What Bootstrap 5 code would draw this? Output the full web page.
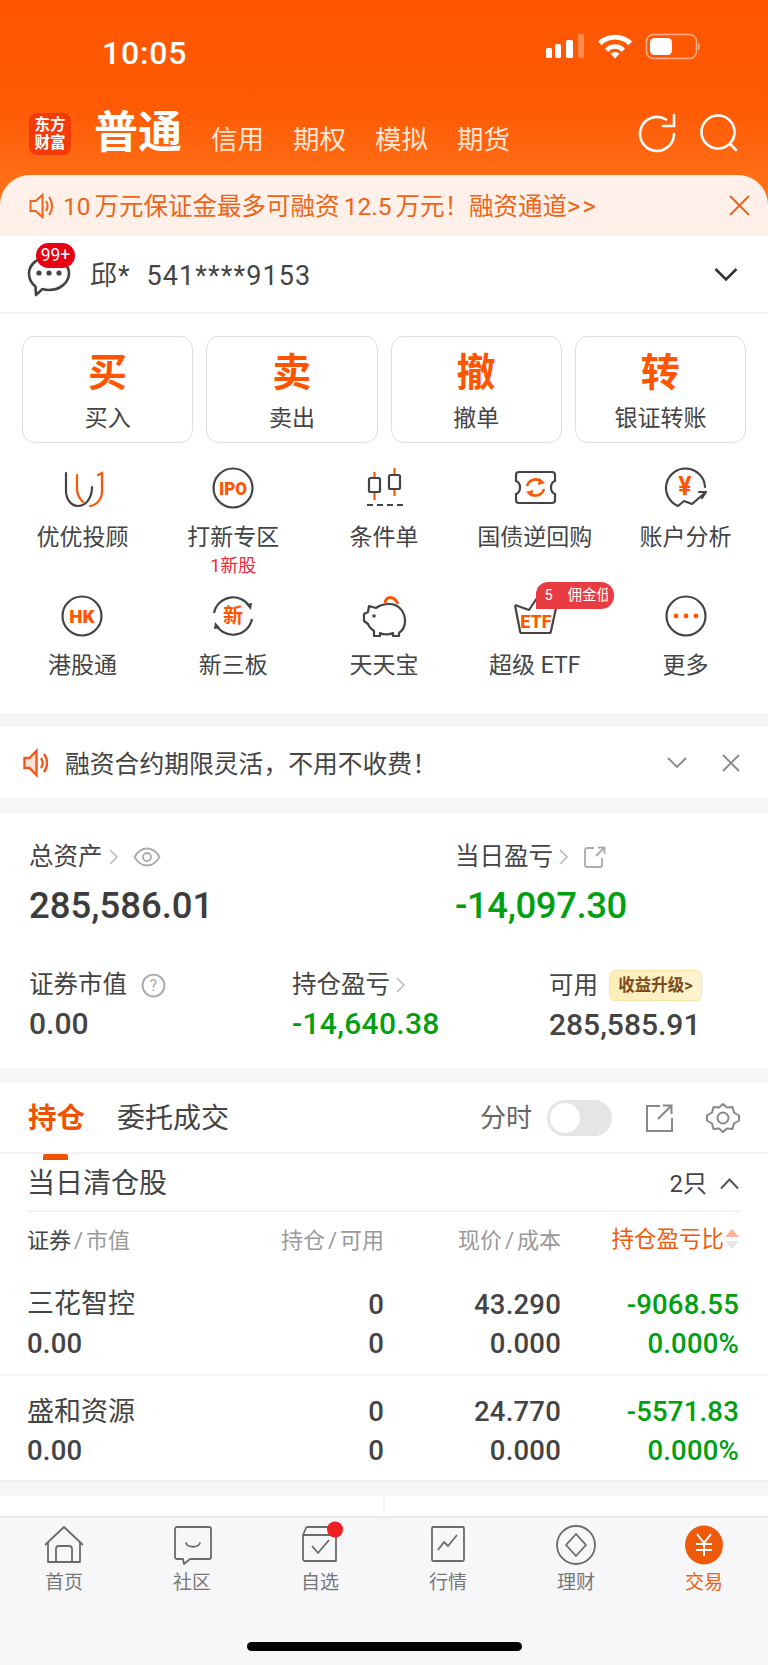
<!DOCTYPE html>
<html lang="zh-CN">
<head>
    <meta charset="UTF-8">
    <meta name="viewport" content="width=device-width, initial-scale=1.0">
    <title>交易</title>
    <link href="https://cdn.jsdelivr.net/npm/bootstrap@5.3.0/dist/css/bootstrap.min.css" rel="stylesheet">
    <style>
        body { margin: 0; background: #f5f6f8; color: #444; font-family: Roboto, "Noto Sans CJK SC", sans-serif; }
        .phone { width: 768px; height: 1665px; overflow: hidden; }

        /* orange header */
        .hd-wrap { height: 236px; background: linear-gradient(180deg, #ff5500 0, #ff5a05 45%, #ff7d22 100%); }
        .status-bar { height: 104px; padding: 33px 68px 0 102px; color: #fff; }
        .clock { font-size: 32px; font-weight: 500; line-height: 40px; letter-spacing: .8px; }
        .hd-row { height: 71px; padding: 0 30px 0 29px; color: #fff; }
        .logo-box { width: 42px; height: 42px; margin: 9px 23px 0 0; border-radius: 8px; background: #f43a08; font-size: 15.5px; font-weight: 700; line-height: 18px; text-align: center; padding-top: 3px; }
        .acct-main { font-size: 44px; font-weight: 700; line-height: 50px; width: 117px; margin-top: 4px; }
        .acct-sub { font-size: 26.5px; line-height: 34px; width: 82px; color: #ffe6d6; margin-top: 19px; }
        .hd-tools { margin-left: auto; gap: 24px; margin-top: 9px; }

        .promo { height: 61px; background: #fff1ea; border-radius: 30px 30px 0 0; padding: 0 18px 0 29px; color: #ee6418; font-size: 24.5px; }
        .promo-txt { margin-left: 10px; margin-top: 2px; white-space: nowrap; word-spacing: -2px; }
        .promo-txt span { letter-spacing: 2px; font-size: 25.5px; }

        .acct-row { height: 78px; background: #fff; border-bottom: 2px solid #f1f2f4; padding: 0 30px 0 27px; }
        .msg-wrap { width: 44px; height: 50px; margin-right: 19px; }
        .msg-badge { top: -6px; left: 9px; width: 39px; height: 25px; border-radius: 13px; background: #e60012; color: #fff; font-size: 17.5px; line-height: 25px; text-align: center; }
        .acct-name { font-size: 27px; letter-spacing: 1.1px; margin-top: 4px; }

        /* trade buttons and function grid */
        .func-panel { height: 399px; background: #fff; }
        .trade-btns { padding: 22px 22px 0; gap: 13px; }
        .trade-btn { flex: 1 1 0; height: 107px; padding: 0; border: 1.5px solid #dedede; border-radius: 13px; color: #444; background: #fff; }
        .trade-big { color: #ff5500; font-size: 39px; font-weight: 700; line-height: 44px; margin-top: 5px; }
        .trade-lbl { font-size: 23px; line-height: 30px; margin-top: 9px; }
        .func-grid { padding: 22px 7px 0; }
        .func-cell { height: 128px; text-align: center; }
        .func-cell svg { display: block; margin: 0 auto; }
        .func-lbl { font-size: 23px; line-height: 30px; margin-top: 12px; white-space: nowrap; }
        .func-sub { color: #f0283c; font-size: 18px; line-height: 20px; margin-top: 3px; }
        .etf-tag { top: -11px; left: 77px; width: 78px; height: 27px; background: #e83c42; border-radius: 12px 13px 13px 0; color: #fff; font-size: 14.5px; line-height: 27px; padding-left: 8px; text-align: left; overflow: hidden; white-space: nowrap; }
        .etf-clip { display: inline-block; width: 40px; margin-left: 15px; overflow: hidden; vertical-align: top; }

        .notice-row { height: 71px; margin-top: 14px; background: #fff; padding: 0 28px 0 23px; font-size: 24.8px; }
        .notice-close { margin-left: 35px; }

        /* asset summary */
        .asset-panel { height: 255px; margin-top: 15px; background: #fff; padding: 29px 0 0 29px; }
        .asset-lbl { font-size: 24.5px; line-height: 30px; display: flex; align-items: center; }
        .asset-num { font-size: 36.5px; font-weight: 500; line-height: 44px; margin-top: 12px; color: #3c3c3c; }
        .asset-num-sm { font-size: 30px; font-weight: 500; line-height: 36px; margin-top: 6px; }
        .asset-num.up-green, .up-green { color: #00a010; }
        .asset-num.up-green { letter-spacing: -.4px; }
        .asset-c1 { width: 426px; }
        .asset-d1 { width: 263px; }
        .asset-d2 { width: 257px; }
        .asset-row2 { margin-top: 42px; }
        .asset-row2 .asset-num-sm.up-green { letter-spacing: .3px; }
        .eye-ic { margin-left: 13px; }
        .help-ic { margin-left: 14px; }
        .yield-tag { width: 93px; height: 31px; margin-left: 11px; border: 1px solid #fbe6a6; border-radius: 6px; background: linear-gradient(90deg, #fdeeb8, #fff3cf); color: #7a4a1c; font-size: 16.5px; font-weight: 700; line-height: 29px; text-align: center; white-space: nowrap; }

        /* holdings */
        .hold-panel { height: 399px; margin-top: 15px; background: #fff; border-bottom: 2px solid #f0f1f3; }
        .tab-row { height: 71px; padding: 0 28px; border-bottom: 2px solid #f2f3f5; }
        .tab-on { color: #f15200; font-size: 28.5px; font-weight: 700; margin-right: 32px; margin-top: 3px; }
        .tab-on::after { content: ""; position: absolute; left: 15px; bottom: -20px; width: 25px; height: 6px; border-radius: 2px 2px 0 0; background: #f15200; }
        .tab-off { font-size: 28px; margin-top: 3px; }
        .tab-tools { margin-left: auto; }
        .tab-tools span { font-size: 26px; color: #666; margin-right: 15px; margin-top: 1px; }
        .fake-switch { width: 65px; height: 36px; border-radius: 18px; background: #e4e5e7; margin-right: 33px; padding: 3px; }
        .fake-switch i { display: block; width: 30px; height: 30px; border-radius: 50%; background: #fff; }
        .gear-ic { margin-left: 33px; }

        .clear-head { height: 58px; margin: 0 27px; padding-top: 3px; border-bottom: 2px solid #f2f3f5; font-size: 28px; }
        .clear-count { font-size: 24px; }
        .caret-ic { margin-left: 13px; margin-right: 2px; }
        .pos-cols { display: grid; grid-template-columns: 1fr 150px 177px 178px; padding: 0 29px 0 27px; text-align: right; }
        .pos-cols > :first-child { text-align: left; }
        .pos-head { height: 56px; font-size: 22px; color: #999; align-items: center; white-space: nowrap; margin-bottom: 2px; }
        .pos-head b { font-weight: 400; color: #444; }
        .pos-head i { font-style: normal; margin: 0 3px; }
        .pos-sort { color: #f15a0a; font-size: 22.5px; }
        .sort-arrows { display: inline-block; vertical-align: -2px; margin-left: 1px; }
        .pos-item { height: 106px; padding-top: 15px; font-size: 27.5px; font-weight: 500; line-height: 39px; letter-spacing: .2px; border-bottom: 2px solid #f5f6f8; }
        .pos-item.pos-last { border-bottom: 0; height: 103px; padding-top: 17px; line-height: 38.5px; }
        .pos-name { font-size: 27px; font-weight: 400; letter-spacing: 0; }
        .split-strip { height: 20px; margin-top: 14px; background: #fff; justify-content: center; }
        .split-strip i { display: block; width: 2px; background: #f5f6f8; }

        /* bottom tabs */
        .foot-bar { height: 149px; background: #f7f7fa; border-top: 2px solid #e9e9ec; }
        .foot-tabs { height: 124px; }
        .foot-tab { flex: 1 1 0; text-align: center; color: #777; font-size: 19px; line-height: 24px; padding-top: 7px; }
        .foot-tab svg { display: block; margin: 0 auto 6px; overflow: visible; }
        .foot-on { color: #f0610f; }
        .home-bar { width: 275px; height: 9px; margin: 0 auto; border-radius: 5px; background: #000; }
        svg text { font-family: Roboto, "Noto Sans CJK SC", sans-serif; }
    </style>
</head>
<body>
<div class="phone d-flex flex-column">

    <div class="hd-wrap">
        <div class="status-bar d-flex justify-content-between">
            <div class="clock">10:05</div>
            <svg width="154" height="28" viewBox="0 0 154 28">
                <rect x="0" y="15" width="6" height="10" rx="1.5" fill="#fff"/>
                <rect x="9" y="11" width="6" height="14" rx="1.5" fill="#fff"/>
                <rect x="20" y="7" width="7" height="18" rx="1.5" fill="#fff"/>
                <rect x="32" y="1" width="6" height="24" rx="1.5" fill="#fff" opacity=".3"/>
                <path d="M52 10a24 24 0 0 1 34 0l-3.500 4a18 18 0 0 0-27 0zM59 17.500a13 13 0 0 1 20 0l-3.500 3.500a8 8 0 0 0-13 0zM64.500 23a6 6 0 0 1 9 0L69 28z" fill="#fff" transform="translate(0 -1) scale(1 .95)"/>
                <rect x="100.500" y="1.500" width="50" height="24" rx="7" fill="none" stroke="#fff" stroke-opacity=".55" stroke-width="1.500"/>
                <rect x="104" y="5" width="22" height="17" rx="4.500" fill="#fff"/>
                <path d="M152 9.500c2 .5 2 7 0 8z" fill="#fff" opacity=".55"/>
            </svg>
        </div>
        <div class="hd-row d-flex">
            <div class="logo-box">东方<br>财富</div>
            <div class="acct-main">普通</div>
            <div class="acct-sub">信用</div>
            <div class="acct-sub">期权</div>
            <div class="acct-sub">模拟</div>
            <div class="acct-sub">期货</div>
            <div class="hd-tools d-flex">
                <svg width="38" height="40" viewBox="0 0 38 40" fill="none" stroke="#fff" stroke-width="2.600" stroke-linecap="round">
                    <path d="M28 6.500A17 17 0 1 0 36 21"/>
                    <path d="M36 2v11H25"/>
                </svg>
                <svg width="38" height="40" viewBox="0 0 38 40" fill="none" stroke="#fff" stroke-width="2.600" stroke-linecap="round">
                    <circle cx="18" cy="19" r="16.500"/>
                    <path d="M30 31l6 6"/>
                </svg>
            </div>
        </div>
        <div class="promo d-flex align-items-center">
            <svg width="24" height="28" viewBox="0 0 24 28" fill="none" stroke="#ee6418" stroke-width="2">
                <path d="M1.500 9h5l7-6v22l-7-6h-5z"/>
                <path d="M17 9c2 3 2 7 0 10M20 5c4 5 4 13 0 18"/>
            </svg>
            <div class="promo-txt">10 万元保证金最多可融资 12.5 万元！融资通道<span>&gt;&gt;</span></div>
            <svg class="ms-auto" width="21" height="21" viewBox="0 0 21 21" stroke="#ee6418" stroke-width="2"><path d="M1 1l19 19M20 1L1 20"/></svg>
        </div>
    </div>

    <div class="acct-row d-flex align-items-center">
        <div class="msg-wrap position-relative">
            <svg width="44" height="50" viewBox="0 0 44 50" fill="none" stroke="#444" stroke-width="2.600" stroke-linejoin="round">
                <path d="M22 8c11 0 20 7.500 20 16.500S33 41 22 41c-2.500 0-4.500-.3-6.500-1L9 46l-.5-8.500C4 34 2 29.500 2 24.500 2 15.500 11 8 22 8z"/>
                <circle cx="12" cy="24" r="2.600" fill="#444" stroke="none"/>
                <circle cx="22" cy="24" r="2.600" fill="#444" stroke="none"/>
                <circle cx="32" cy="24" r="2.600" fill="#444" stroke="none"/>
            </svg>
            <span class="msg-badge position-absolute">99+</span>
        </div>
        <div class="acct-name">邱*&nbsp;&nbsp;541****9153</div>
        <svg class="ms-auto" width="24" height="15" viewBox="0 0 24 15" fill="none" stroke="#333" stroke-width="2.600"><path d="M1.500 2l10.500 10.500L22.500 2"/></svg>
    </div>

    <div class="func-panel">
        <div class="trade-btns d-flex">
            <button class="btn trade-btn"><div class="trade-big">买</div><div class="trade-lbl">买入</div></button>
            <button class="btn trade-btn"><div class="trade-big">卖</div><div class="trade-lbl">卖出</div></button>
            <button class="btn trade-btn"><div class="trade-big">撤</div><div class="trade-lbl">撤单</div></button>
            <button class="btn trade-btn"><div class="trade-big">转</div><div class="trade-lbl">银证转账</div></button>
        </div>
        <div class="func-grid row row-cols-5 g-0">
            <div class="col func-cell">
                <svg width="46" height="46" viewBox="0 0 46 46" fill="none" stroke-width="2.200" stroke-linecap="round">
                    <path stroke="#444" d="M7 8V26C7 34 12 41 19 41C27 41 33 33 33 22"/>
                    <path stroke="#ff5500" d="M18 10V24C18 30 21 34 24 37M39 10L43 8V26C43 34 38 40 31 41"/>
                </svg>
                <div class="func-lbl">优优投顾</div>
            </div>
            <div class="col func-cell">
                <svg width="46" height="46" viewBox="0 0 46 46">
                    <circle cx="23" cy="23" r="19.500" fill="none" stroke="#444" stroke-width="2.200"/>
                    <text x="23" y="30" text-anchor="middle" font-size="19" font-weight="900" fill="#ff5500" textLength="28" lengthAdjust="spacingAndGlyphs">IPO</text>
                </svg>
                <div class="func-lbl">打新专区</div>
                <div class="func-sub">1新股</div>
            </div>
            <div class="col func-cell">
                <svg width="46" height="46" viewBox="0 0 46 46" fill="none" stroke-width="2.200">
                    <path stroke="#ff5500" d="M13.500 7v28M33.500 3v28"/>
                    <rect x="8" y="13" width="11" height="14" rx="1.500" fill="#fff" stroke="#444"/>
                    <rect x="28" y="10" width="11" height="14" rx="1.500" fill="#fff" stroke="#444"/>
                    <path stroke="#444" stroke-dasharray="6 4" d="M6 40h36"/>
                </svg>
                <div class="func-lbl">条件单</div>
            </div>
            <div class="col func-cell">
                <svg width="46" height="46" viewBox="0 0 46 46" fill="none" stroke-width="2.200">
                    <path stroke="#444" d="M7 7H40a3 3 0 0 1 3 3v6c-3 1-4 4-4 6.500s1 5.500 4 6.500v6a3 3 0 0 1-3 3H7a3 3 0 0 1-3-3v-6c3-1 4-4 4-6.500s-1-5.500-4-6.500V10a3 3 0 0 1 3-3z"/>
                    <path stroke="#ff5500" stroke-width="2.600" d="M15 21a9 9 0 0 1 15-4M32 24a9 9 0 0 1-15 4"/>
                    <path fill="#ff5500" d="M27 13l6 5-7 2zM20 32l-6-5 7-2z"/>
                </svg>
                <div class="func-lbl">国债逆回购</div>
            </div>
            <div class="col func-cell">
                <svg width="46" height="46" viewBox="0 0 46 46" fill="none" stroke="#444" stroke-width="2.200" stroke-linejoin="round" stroke-linecap="round">
                    <path d="M42 22A19.500 19.500 0 1 0 15 41L21 36L29 39L43 27M36 27H43L39 33"/>
                    <text x="22" y="30" text-anchor="middle" font-size="25" font-weight="700" fill="#ff5500" stroke="none">¥</text>
                </svg>
                <div class="func-lbl">账户分析</div>
            </div>
            <div class="col func-cell">
                <svg width="46" height="46" viewBox="0 0 46 46">
                    <circle cx="23" cy="23" r="19.500" fill="none" stroke="#444" stroke-width="2.200"/>
                    <text x="23" y="30" text-anchor="middle" font-size="19" font-weight="900" fill="#ff5500">HK</text>
                </svg>
                <div class="func-lbl">港股通</div>
            </div>
            <div class="col func-cell">
                <svg width="46" height="46" viewBox="0 0 46 46" fill="none">
                    <path stroke="#444" stroke-width="2.200" d="M4 20A19.500 19.500 0 0 1 40 14M42 26A19.500 19.500 0 0 1 6 32"/>
                    <path fill="#444" d="M36 11l6-1-1 7zM10 35l-6 1 1-7z"/>
                    <text x="23" y="30" text-anchor="middle" font-size="20" font-weight="700" fill="#ff5500">新</text>
                </svg>
                <div class="func-lbl">新三板</div>
            </div>
            <div class="col func-cell">
                <svg width="46" height="46" viewBox="0 0 46 46" fill="none" stroke-width="2.200" stroke-linejoin="round">
                    <path stroke="#ff5500" stroke-width="2.800" d="M24 10C25 3 33 2 37 11"/>
                    <path stroke="#444" d="M8 13L15 15C19 12 24 11 28 11C38 11 44 19 44 28C44 34 41 38 38 40V43H32V40C27 42 23 42 19 40V43H13V38C10 36 8 34 7 31L3 28V21L7 19Z"/>
                    <circle cx="13" cy="23" r="1.800" fill="#444"/>
                </svg>
                <div class="func-lbl">天天宝</div>
            </div>
            <div class="col func-cell position-relative">
                <svg width="46" height="46" viewBox="0 0 46 46" fill="none" stroke="#444" stroke-width="2.200" stroke-linejoin="round">
                    <path d="M3 12L17 17L25 5M44 15L39 38a2 2 0 0 1-2 2H10a2 2 0 0 1-2-2L3 12"/>
                    <text x="24" y="35" text-anchor="middle" font-size="18" font-weight="800" fill="#ff5500" stroke="none">ETF</text>
                </svg>
                <div class="etf-tag position-absolute">5<span class="etf-clip">佣金低</span></div>
                <div class="func-lbl">超级 ETF</div>
            </div>
            <div class="col func-cell">
                <svg width="46" height="46" viewBox="0 0 46 46">
                    <circle cx="23" cy="23" r="19.500" fill="none" stroke="#444" stroke-width="2.200"/>
                    <circle cx="13" cy="23" r="2.400" fill="#ff5500"/>
                    <circle cx="23" cy="23" r="2.400" fill="#ff5500"/>
                    <circle cx="33" cy="23" r="2.400" fill="#ff5500"/>
                </svg>
                <div class="func-lbl">更多</div>
            </div>
        </div>
    </div>

    <div class="notice-row d-flex align-items-center">
        <svg width="26" height="30" viewBox="0 0 26 30" fill="none" stroke="#f2591a" stroke-width="2.400">
            <path d="M1.500 10h5l7-7v24l-7-7h-5z" fill="#fde3d6"/>
            <path d="M18 10c2 3 2 7 0 10M21 6c4 5 4 13 0 18"/>
        </svg>
        <div class="ms-3 mt-1">融资合约期限灵活，不用不收费！</div>
        <svg class="ms-auto" width="20" height="13" viewBox="0 0 20 13" fill="none" stroke="#888" stroke-width="1.800"><path d="M1 2l9 9 9-9"/></svg>
        <svg class="notice-close" width="18" height="18" viewBox="0 0 18 18" stroke="#888" stroke-width="1.800"><path d="M1 1l16 16M17 1L1 17"/></svg>
    </div>

    <div class="asset-panel">
        <div class="d-flex">
            <div class="asset-c1">
                <div class="asset-lbl">总资产
                    <svg class="ms-1" width="13" height="18" viewBox="0 0 13 18" fill="none" stroke="#bbb" stroke-width="1.600"><path d="M3 2l7 7-7 7"/></svg>
                    <svg class="eye-ic" width="28" height="24" viewBox="0 0 28 24" fill="none" stroke="#aaa" stroke-width="1.800"><path d="M1.500 12C5 6 9 3.500 14 3.500S23 6 26.500 12C23 18 19 20.500 14 20.500S5 18 1.500 12z"/><circle cx="14" cy="12" r="4"/></svg>
                </div>
                <div class="asset-num">285,586.01</div>
            </div>
            <div>
                <div class="asset-lbl">当日盈亏
                    <svg class="ms-1" width="13" height="18" viewBox="0 0 13 18" fill="none" stroke="#bbb" stroke-width="1.600"><path d="M3 2l7 7-7 7"/></svg>
                    <svg class="eye-ic" width="24" height="24" viewBox="0 0 24 24" fill="none" stroke="#aaa" stroke-width="1.800"><path d="M11 3H4a2 2 0 0 0-2 2v15a2 2 0 0 0 2 2h13a2 2 0 0 0 2-2V13M13 11L21 3M15 2.500h6.500V9"/></svg>
                </div>
                <div class="asset-num up-green">-14,097.30</div>
            </div>
        </div>
        <div class="asset-row2 d-flex">
            <div class="asset-d1">
                <div class="asset-lbl">证券市值
                    <svg class="help-ic" width="25" height="25" viewBox="0 0 24 24" fill="none" stroke="#aaa" stroke-width="1.800"><circle cx="12" cy="12" r="10.500"/><text x="12" y="17.500" text-anchor="middle" font-size="15" fill="#aaa" stroke="none">?</text></svg>
                </div>
                <div class="asset-num-sm">0.00</div>
            </div>
            <div class="asset-d2">
                <div class="asset-lbl">持仓盈亏
                    <svg class="ms-1" width="13" height="18" viewBox="0 0 13 18" fill="none" stroke="#bbb" stroke-width="1.600"><path d="M3 2l7 7-7 7"/></svg>
                </div>
                <div class="asset-num-sm up-green">-14,640.38</div>
            </div>
            <div>
                <div class="asset-lbl">可用<span class="yield-tag">收益升级&gt;</span></div>
                <div class="asset-num-sm">285,585.91</div>
            </div>
        </div>
    </div>

    <div class="hold-panel">
        <div class="tab-row d-flex align-items-center">
            <div class="tab-on position-relative">持仓</div>
            <div class="tab-off">委托成交</div>
            <div class="tab-tools d-flex align-items-center">
                <span>分时</span>
                <div class="fake-switch"><i></i></div>
                <svg width="28" height="28" viewBox="0 0 28 28" fill="none" stroke="#888" stroke-width="2"><path d="M15 2H2v25h25V14M13 15L26 2M18 1.500h8.500V10"/></svg>
                <svg class="gear-ic" width="34" height="32" viewBox="0 0 34 32" fill="none" stroke="#888" stroke-width="2" stroke-linejoin="round"><path d="M17 1.500l4 3.500 5.500-.5 1.500 5.500 5 3v5l-5 3-1.500 5.500-5.500-.5-4 3.500-4-3.500-5.500.5L6 21l-5-3v-5l5-3 1.500-5.500 5.500.5z" transform="translate(0 .5)"/><circle cx="17" cy="16" r="5.500"/></svg>
            </div>
        </div>
        <div class="clear-head d-flex align-items-center justify-content-between">
            <div>当日清仓股</div>
            <div class="clear-count d-flex align-items-center">2只
                <svg class="caret-ic" width="19" height="13" viewBox="0 0 19 13" fill="none" stroke="#555" stroke-width="2"><path d="M1 11.500l8.500-9 8.500 9"/></svg>
            </div>
        </div>
        <div class="pos-cols pos-head">
            <div><b>证券</b><i>/</i>市值</div>
            <div>持仓<i>/</i>可用</div>
            <div>现价<i>/</i>成本</div>
            <div class="pos-sort">持仓盈亏比<svg class="sort-arrows" width="14" height="20" viewBox="0 0 14 20"><path d="M7 0l7 8H0z" fill="#fbb49a"/><path d="M7 20l7-8H0z" fill="#e6e6e6"/></svg></div>
        </div>
        <div class="pos-cols pos-item">
            <div><div class="pos-name">三花智控</div><div>0.00</div></div>
            <div><div>0</div><div>0</div></div>
            <div><div>43.290</div><div>0.000</div></div>
            <div class="up-green"><div>-9068.55</div><div>0.000%</div></div>
        </div>
        <div class="pos-cols pos-item pos-last">
            <div><div class="pos-name">盛和资源</div><div>0.00</div></div>
            <div><div>0</div><div>0</div></div>
            <div><div>24.770</div><div>0.000</div></div>
            <div class="up-green"><div>-5571.83</div><div>0.000%</div></div>
        </div>
    </div>

    <div class="split-strip d-flex"><i></i></div>

    <div class="foot-bar">
        <div class="foot-tabs d-flex">
            <div class="foot-tab">
                <svg width="44" height="40" viewBox="0 0 44 40" fill="none" stroke="#6b6b6b" stroke-width="1.800" stroke-linejoin="round"><path d="M3 20L22 2l19 18M6 18V37H38V18M14 37V24a3 3 0 0 1 3-3h10a3 3 0 0 1 3 3V37"/></svg>
                首页
            </div>
            <div class="foot-tab">
                <svg width="44" height="40" viewBox="0 0 44 40" fill="none" stroke="#6b6b6b" stroke-width="1.800" stroke-linejoin="round"><path d="M7 2h32a2 2 0 0 1 2 2v28a2 2 0 0 1-2 2H20l-6 5-1-5H7a2 2 0 0 1-2-2V4a2 2 0 0 1 2-2z"/><path d="M16 18c2 5 12 5 14 0" stroke-linecap="round"/></svg>
                社区
            </div>
            <div class="foot-tab position-relative">
                <svg width="44" height="40" viewBox="0 0 44 40" fill="none" stroke="#6b6b6b" stroke-width="1.800" stroke-linejoin="round"><path d="M5 10l3-7a2 2 0 0 1 2-1H36a2 2 0 0 1 2 2V36H7a2 2 0 0 1-2-2zM5 10H38M14 21l6 7 11-13"/><circle cx="37" cy="4.500" r="8" fill="#f01e23" stroke="none"/></svg>
                自选
            </div>
            <div class="foot-tab">
                <svg width="44" height="40" viewBox="0 0 44 40" fill="none" stroke="#6b6b6b" stroke-width="1.800" stroke-linejoin="round"><rect x="6" y="2" width="32" height="34" rx="1.500"/><path d="M12 25l6-8 4 4 9-11"/></svg>
                行情
            </div>
            <div class="foot-tab">
                <svg width="44" height="40" viewBox="0 0 44 40" fill="none" stroke="#6b6b6b" stroke-width="1.800" stroke-linejoin="round"><circle cx="22" cy="20" r="19"/><path d="M22 9l10 11-10 11-10-11z"/></svg>
                理财
            </div>
            <div class="foot-tab foot-on">
                <svg width="44" height="40" viewBox="0 0 44 40"><ellipse cx="22" cy="20" rx="19" ry="19.500" fill="#ee5a0a"/><path d="M15 9l7 9 7-9M22 18v13M14 19h16M14 25h16" fill="none" stroke="#fff" stroke-width="2"/></svg>
                交易
            </div>
        </div>
        <div class="home-bar"></div>
    </div>
</div>
<script src="https://cdn.jsdelivr.net/npm/bootstrap@5.3.0/dist/js/bootstrap.bundle.min.js"></script>
</body>
</html>
